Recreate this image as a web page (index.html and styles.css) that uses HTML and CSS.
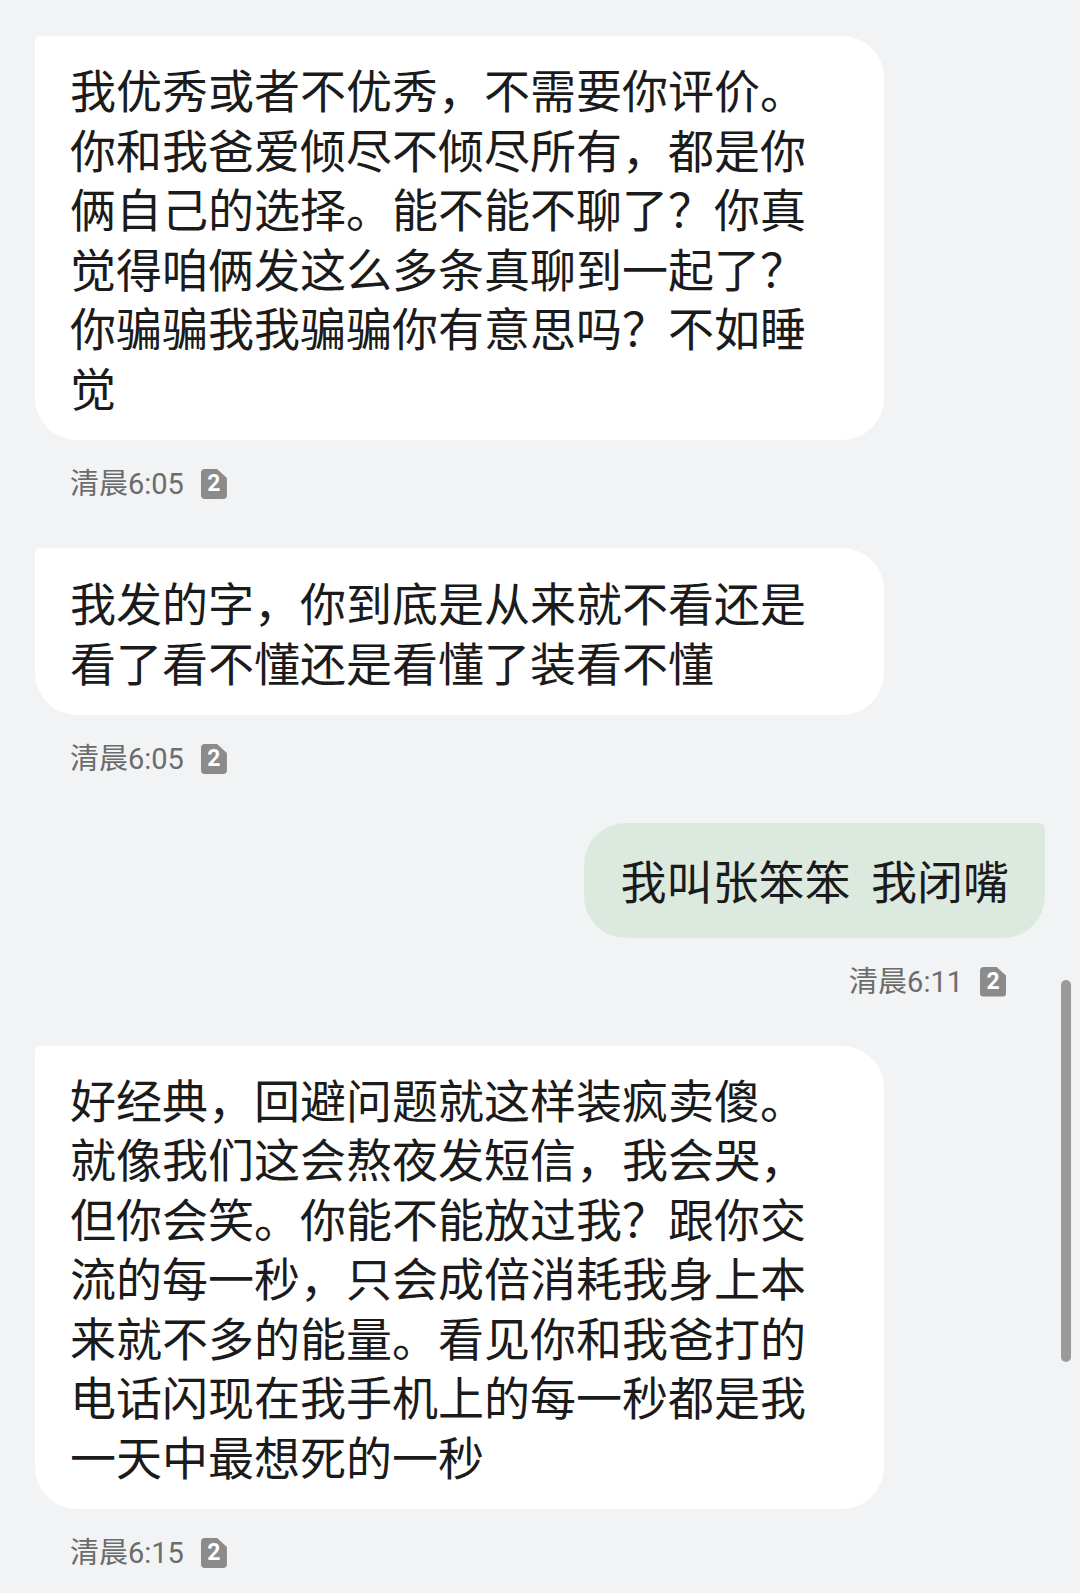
FILE: index.html
```html
<!DOCTYPE html>
<html lang="zh-CN">
<head>
<meta charset="utf-8">
<title>短信</title>
<link rel="stylesheet" href="styles.css">
</head>
<body>
<div class="chat">
  <div class="msg in">
    <div class="bubble">我优秀或者不优秀，不需要你评价。你和我爸爱倾尽不倾尽所有，都是你俩自己的选择。能不能不聊了？你真觉得咱俩发这么多条真聊到一起了？你骗骗我我骗骗你有意思吗？不如睡觉</div>
    <div class="meta"><span class="time">清晨6:05</span><span class="sim">2</span></div>
  </div>
  <div class="msg in">
    <div class="bubble two">我发的字，你到底是从来就不看还是看了看不懂还是看懂了装看不懂</div>
    <div class="meta"><span class="time">清晨6:05</span><span class="sim">2</span></div>
  </div>
  <div class="msg out">
    <div class="bubble">我叫张笨笨  我闭嘴</div>
    <div class="meta"><span class="time">清晨6:11</span><span class="sim">2</span></div>
  </div>
  <div class="msg in">
    <div class="bubble">好经典，回避问题就这样装疯卖傻。就像我们这会熬夜发短信，我会哭，但你会笑。你能不能放过我？跟你交流的每一秒，只会成倍消耗我身上本来就不多的能量。看见你和我爸打的电话闪现在我手机上的每一秒都是我一天中最想死的一秒</div>
    <div class="meta"><span class="time">清晨6:15</span><span class="sim">2</span></div>
  </div>
</div>
<div class="scrollbar"></div>
</body>
</html>
```
FILE: styles.css
```css
html, body {
  margin: 0;
  padding: 0;
  background: #f1f3f5;
}
body {
  width: 1080px;
  height: 1593px;
  overflow: hidden;
  position: relative;
  font-family: "Noto Sans CJK SC", sans-serif;
}
.chat {
  display: flex;
  flex-direction: column;
  padding: 36px 35px 0 35px;
}
.msg {
  display: flex;
  flex-direction: column;
}
.msg.in { align-items: flex-start; }
.msg.out { align-items: flex-end; }
.bubble {
  box-sizing: border-box;
  font-size: 46px;
  line-height: 59.5px;
  color: #1b1b1b;
  word-break: break-all;
}
.msg.in .bubble {
  width: 849px;
  background: #ffffff;
  padding: 23px 70px 24px 35px;
  border-radius: 5px 42px 42px 42px;
}
.msg.in .bubble.two {
  padding-top: 24px;
  padding-bottom: 24px;
}
.msg.out .bubble {
  background: #dce9de;
  padding: 27px 36px 28px 36px;
  border-radius: 42px 6px 42px 42px;
  white-space: pre;
}
.meta {
  display: flex;
  align-items: center;
  height: 32px;
  margin: 28px 0 48px 0;
}
.msg.in .meta { padding-left: 35px; }
.msg.out .meta { padding-right: 39px; }
.time {
  font-family: Roboto, "Noto Sans CJK SC", sans-serif;
  font-size: 29px;
  line-height: 32px;
  color: #6c6c6c;
}
.sim {
  margin-left: 17px;
  width: 26px;
  height: 30px;
  background: #8b8b8b;
  color: #ffffff;
  font-family: Roboto, sans-serif;
  font-weight: 700;
  font-size: 23px;
  line-height: 30px;
  text-align: center;
  border-radius: 4px;
  clip-path: polygon(0 0, 62% 0, 100% 30%, 100% 100%, 0 100%);
}
.scrollbar {
  position: absolute;
  left: 1061px;
  top: 980px;
  width: 10px;
  height: 382px;
  border-radius: 5px;
  background: #9a9a9a;
}
```
